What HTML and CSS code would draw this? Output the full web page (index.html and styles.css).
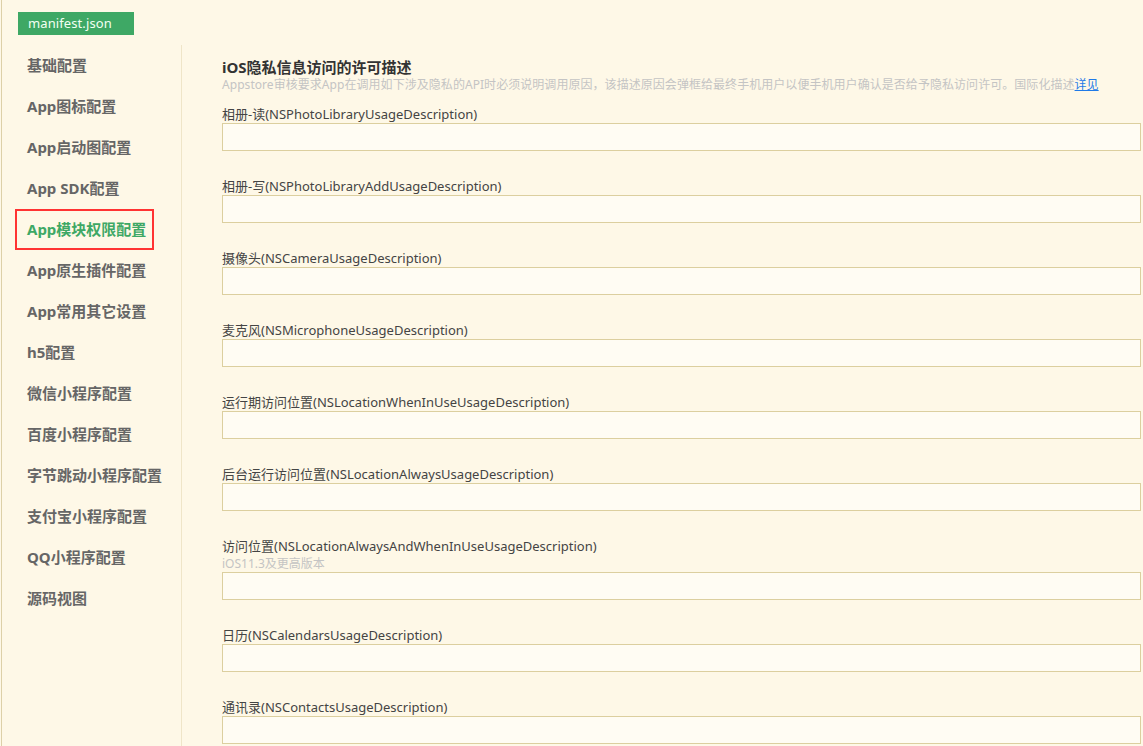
FILE: index.html
```html
<!DOCTYPE html>
<html lang="zh">
<head>
  <meta charset="utf-8">
  <title>manifest.json</title>
  <link rel="stylesheet" href="styles.css">
</head>
<body>
  <div class="page">
    <div class="tabs">
      <span class="tab">manifest.json</span>
    </div>

    <div class="main">
      <div class="sidebar">
        <a class="menu-item">基础配置</a>
        <a class="menu-item">App图标配置</a>
        <a class="menu-item">App启动图配置</a>
        <a class="menu-item">App SDK配置</a>
        <a class="menu-item active">App模块权限配置</a>
        <a class="menu-item">App原生插件配置</a>
        <a class="menu-item">App常用其它设置</a>
        <a class="menu-item">h5配置</a>
        <a class="menu-item">微信小程序配置</a>
        <a class="menu-item">百度小程序配置</a>
        <a class="menu-item">字节跳动小程序配置</a>
        <a class="menu-item">支付宝小程序配置</a>
        <a class="menu-item">QQ小程序配置</a>
        <a class="menu-item">源码视图</a>
      </div>

      <div class="content">
        <h2 class="section-title">iOS隐私信息访问的许可描述</h2>
        <p class="section-desc">Appstore审核要求App在调用如下涉及隐私的API时必须说明调用原因，该描述原因会弹框给最终手机用户以便手机用户确认是否给予隐私访问许可。国际化描述<a href="#">详见</a></p>

        <div class="field">
          <label>相册-读(NSPhotoLibraryUsageDescription)</label>
          <input type="text">
        </div>
        <div class="field">
          <label>相册-写(NSPhotoLibraryAddUsageDescription)</label>
          <input type="text">
        </div>
        <div class="field">
          <label>摄像头(NSCameraUsageDescription)</label>
          <input type="text">
        </div>
        <div class="field">
          <label>麦克风(NSMicrophoneUsageDescription)</label>
          <input type="text">
        </div>
        <div class="field">
          <label>运行期访问位置(NSLocationWhenInUseUsageDescription)</label>
          <input type="text">
        </div>
        <div class="field">
          <label>后台运行访问位置(NSLocationAlwaysUsageDescription)</label>
          <input type="text">
        </div>
        <div class="field">
          <label>访问位置(NSLocationAlwaysAndWhenInUseUsageDescription)</label>
          <div class="field-note">iOS11.3及更高版本</div>
          <input type="text">
        </div>
        <div class="field">
          <label>日历(NSCalendarsUsageDescription)</label>
          <input type="text">
        </div>
        <div class="field">
          <label>通讯录(NSContactsUsageDescription)</label>
          <input type="text">
        </div>
      </div>
    </div>
  </div>
</body>
</html>
```

FILE: styles.css
```css
* {
  margin: 0;
  padding: 0;
  box-sizing: border-box;
  font-family: "Noto Sans", "Noto Sans CJK SC", sans-serif;
}

html, body {
  height: 100%;
  overflow: hidden;
}

body {
  background: #fef8e7;
  color: #333;
}

.page {
  margin-left: 1px;
  border-left: 1px solid #ddd0a8;
  height: 100%;
}

.tabs {
  padding: 11px 0 0 16px;
  height: 34px;
}

.tab {
  display: inline-block;
  width: 116px;
  height: 23px;
  line-height: 23px;
  padding-left: 10px;
  background: #3ea865;
  color: #f2fff2;
  font-size: 13px;
  letter-spacing: 0.1px;
}

.main {
  display: flex;
  margin-top: 11px;
  height: calc(100% - 45px);
}

.sidebar {
  width: 180px;
  flex: 0 0 180px;
  border-right: 1px solid #efe5c8;
  display: flex;
  flex-direction: column;
}

.menu-item {
  display: block;
  height: 41px;
  line-height: 41px;
  padding-left: 25px;
  font-size: 15px;
  font-weight: bold;
  color: #666;
  cursor: pointer;
}

.menu-item.active {
  color: #3ea865;
  margin-left: 13px;
  width: 139px;
  padding-left: 10px;
  line-height: 37px;
  border: 2px solid #f33;
}

.content {
  flex: 1;
  padding: 13px 2px 0 40px;
}

.section-title {
  font-size: 15px;
  font-weight: bold;
  line-height: 18px;
  color: #333;
}

.section-desc {
  font-size: 12px;
  line-height: 18px;
  color: #c4c4c4;
  white-space: nowrap;
  letter-spacing: 0.05px;
}

.section-desc a {
  color: #1f7ae8;
}

.field {
  margin-top: 26px;
}

.section-desc + .field {
  margin-top: 11px;
}

.field label {
  display: block;
  font-size: 13px;
  line-height: 18px;
  color: #444;
}

.field-note {
  font-size: 12px;
  line-height: 17px;
  color: #c4c4c4;
}

.field input {
  display: block;
  width: 100%;
  height: 28px;
  background: #fffcf3;
  border: 1px solid #dccf9f;
  outline: none;
  padding: 0 6px;
  font-size: 13px;
}
```
